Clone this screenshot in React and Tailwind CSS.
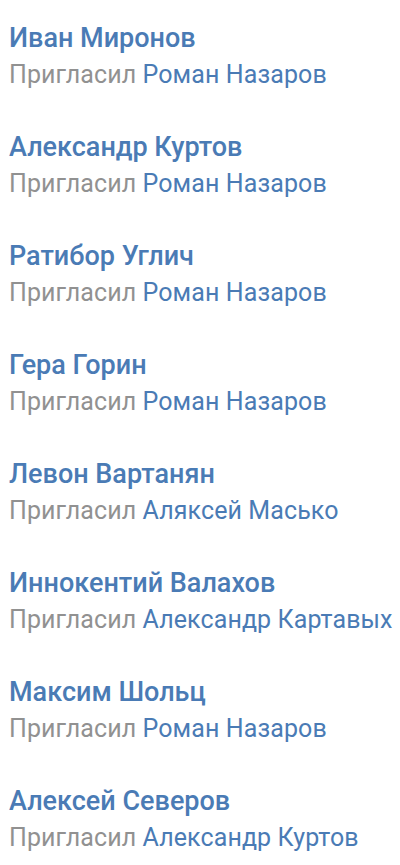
import React from 'react';

const people = [
  { name: 'Иван Миронов', by: 'Роман Назаров' },
  { name: 'Александр Куртов', by: 'Роман Назаров' },
  { name: 'Ратибор Углич', by: 'Роман Назаров' },
  { name: 'Гера Горин', by: 'Роман Назаров' },
  { name: 'Левон Вартанян', by: 'Аляксей Масько' },
  { name: 'Иннокентий Валахов', by: 'Александр Картавых' },
  { name: 'Максим Шольц', by: 'Роман Назаров' },
  { name: 'Алексей Северов', by: 'Александр Куртов' },
];

const App = () => {
  return (
    <div className="min-h-screen bg-white font-['Roboto',sans-serif]">
      {people.map((p) => (
        <div key={p.name} className="h-[109px] px-[9px] pt-[20px]">
          <div className="text-[27px] leading-[36px] font-medium text-[#4a7bb5]">{p.name}</div>
          <div className="text-[25px] leading-[38px] tracking-[0.1px] whitespace-nowrap">
            <span className="text-[#919191]">Пригласил </span>
            <span className="text-[#4a7bb5]">{p.by}</span>
          </div>
        </div>
      ))}
    </div>
  );
};

export default App;
